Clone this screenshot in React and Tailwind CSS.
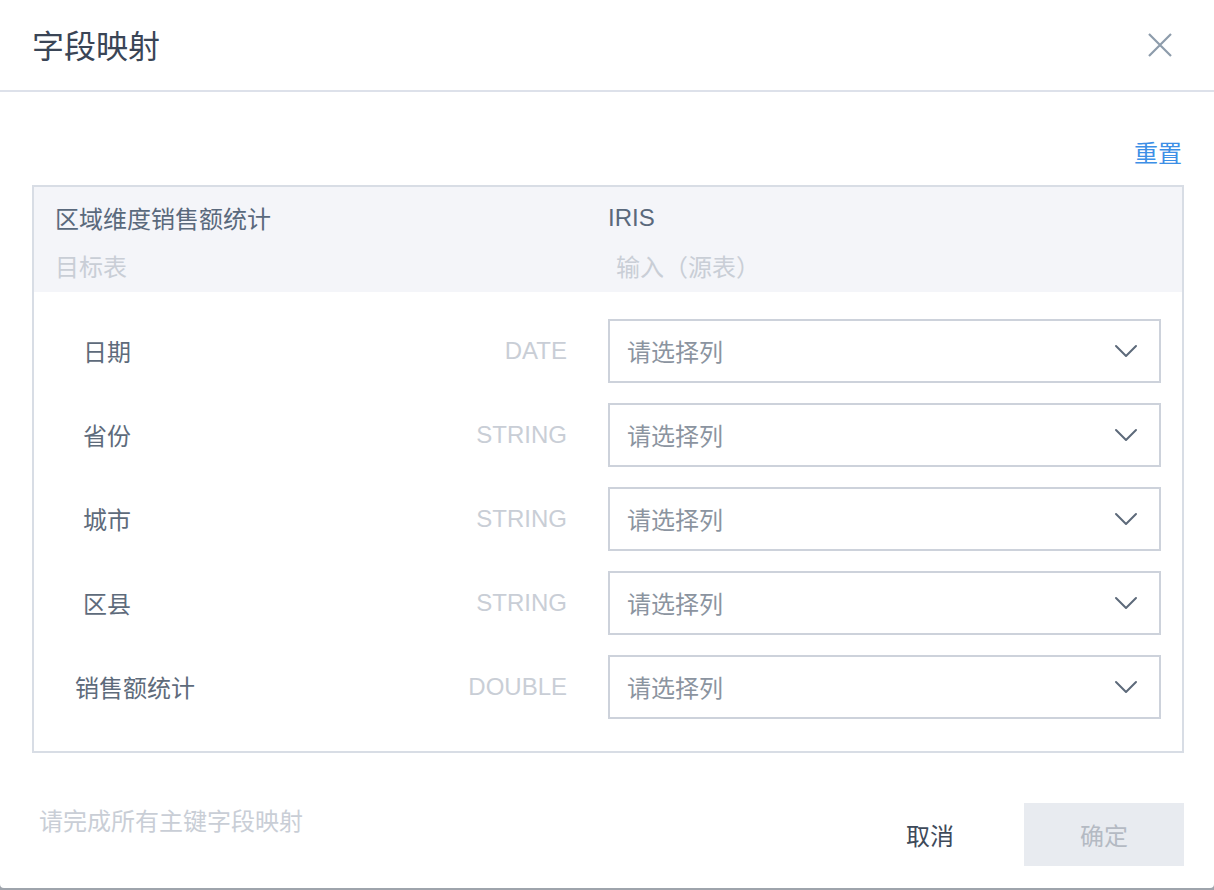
const cjk = { fontFamily: "'Noto Sans CJK SC', 'Noto Sans', sans-serif" };
const latin = { fontFamily: "'Liberation Sans', 'Noto Sans CJK SC', sans-serif" };

const fields = [
    { name: '日期', type: 'DATE', indent: 'pl-[49px]' },
    { name: '省份', type: 'STRING', indent: 'pl-[49px]' },
    { name: '城市', type: 'STRING', indent: 'pl-[49px]' },
    { name: '区县', type: 'STRING', indent: 'pl-[49px]' },
    { name: '销售额统计', type: 'DOUBLE', indent: 'pl-[41px]' },
];

function CloseIcon() {
    return (
        <svg width="26" height="26" viewBox="0 0 26 26" fill="none">
            <path d="M2 2 L24 24 M24 2 L2 24" stroke="#8d9cab" strokeWidth="2.2" />
        </svg>
    );
}

function Chevron() {
    return (
        <svg width="24" height="14" viewBox="0 0 24 14" fill="none">
            <path d="M2 2 L12 12 L22 2" stroke="#5d6a7a" strokeWidth="2" strokeLinecap="round" strokeLinejoin="round" />
        </svg>
    );
}

function ColumnSelect() {
    return (
        <div className="flex h-[64px] w-[553px] items-center justify-between border-2 border-[#cdd2db] bg-white pl-[17px] pr-[21px]">
            <span className="text-[24px] leading-[32px] text-[#8b94a0]" style={cjk}>请选择列</span>
            <Chevron />
        </div>
    );
}

export default function App() {
    return (
        <div className="h-[890px] w-full bg-[#9ea4ac]" style={cjk}>
            <div className="flex h-[888px] w-full flex-col rounded-b-[4px] bg-white">
                {/* header */}
                <div className="flex h-[92px] items-center justify-between border-b-2 border-[#dde1ea] pl-[32px] pr-[41px]">
                    <h2 className="mb-[2px] text-[32px] leading-[40px] text-[#3a4556]" style={cjk}>字段映射</h2>
                    <CloseIcon />
                </div>

                <div className="flex flex-1 flex-col pl-[32px] pr-[30px]">
                    <div className="flex justify-end pt-[44px] pb-[17px]">
                        <span className="pr-[2px] text-[24px] leading-[32px] text-[#3d8fe6]">重置</span>
                    </div>

                    {/* mapping table */}
                    <div className="border-2 border-[#d8dde5]">
                        <div className="flex bg-[#f4f5f9] pt-[15px] pb-[10px]">
                            <div className="w-[574px] pl-[21px]">
                                <div className="mb-[16px] text-[24px] leading-[32px] text-[#5a697c]">区域维度销售额统计</div>
                                <div className="text-[24px] leading-[32px] text-[#c9ced6]">目标表</div>
                            </div>
                            <div className="flex-1">
                                <div className="mb-[16px] text-[24px] leading-[32px] text-[#5a697c]" style={latin}>IRIS</div>
                                <div className="pl-[8px] text-[24px] leading-[32px] text-[#c9ced6]">输入（源表）</div>
                            </div>
                        </div>

                        <div className="flex flex-col gap-[20px] pt-[27px] pb-[32px]">
                            {fields.map((field) => (
                                <div key={field.name} className="flex items-center">
                                    <div className="flex w-[574px] items-center justify-between pr-[41px]">
                                        <span className={`${field.indent} text-[24px] leading-[32px] text-[#5e6b7b]`}>{field.name}</span>
                                        <span className="text-[24px] leading-[32px] text-[#c9ced6]" style={latin}>{field.type}</span>
                                    </div>
                                    <ColumnSelect />
                                </div>
                            ))}
                        </div>
                    </div>

                    {/* footer */}
                    <div className="mt-[50px] flex items-start justify-between">
                        <span className="mt-[1px] pl-[7px] text-[24px] leading-[32px] text-[#c9ced6]">请完成所有主键字段映射</span>
                        <div className="flex items-center gap-[70px]">
                            <span className="text-[24px] leading-[32px] text-[#3e4a5a]">取消</span>
                            <button className="h-[63px] w-[160px] bg-[#e8ebf0] text-[24px] leading-[32px] text-[#b4bac3]" style={cjk}>确定</button>
                        </div>
                    </div>
                </div>
            </div>
        </div>
    );
}
